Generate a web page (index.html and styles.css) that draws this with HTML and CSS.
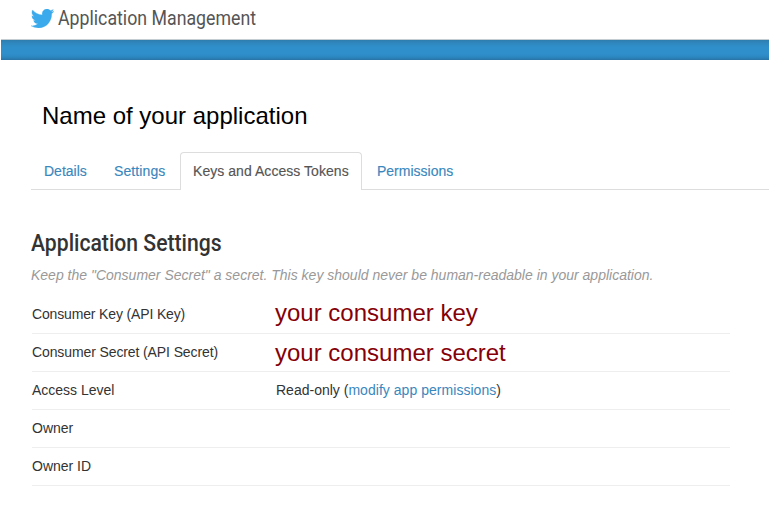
FILE: index.html
```html
<!DOCTYPE html>
<html lang="en">
<head>
<meta charset="utf-8">
<title>Application Management</title>
<link rel="stylesheet" href="styles.css">
</head>
<body>
<header class="header">
  <svg class="logo" viewBox="0 2.2 24 19.6" preserveAspectRatio="none" aria-hidden="true"><path d="M23.953 4.57a10 10 0 0 1-2.825.775 4.958 4.958 0 0 0 2.163-2.723c-.951.555-2.005.959-3.127 1.184a4.92 4.92 0 0 0-8.384 4.482C7.69 8.095 4.067 6.13 1.64 3.162a4.822 4.822 0 0 0-.666 2.475c0 1.71.87 3.213 2.188 4.096a4.904 4.904 0 0 1-2.228-.616v.06a4.923 4.923 0 0 0 3.946 4.827 4.996 4.996 0 0 1-2.212.085 4.936 4.936 0 0 0 4.604 3.417 9.867 9.867 0 0 1-6.102 2.105c-.39 0-.779-.023-1.17-.067a13.995 13.995 0 0 0 7.557 2.209c9.053 0 13.998-7.496 13.998-13.985 0-.21 0-.42-.015-.63A9.935 9.935 0 0 0 24 4.59z"/></svg>
  <span class="brand">Application Management</span>
</header>
<div class="band"></div>
<main class="content">
  <h1 class="app-name">Name of your application</h1>
  <nav class="tabs">
    <a class="tab details">Details</a>
    <a class="tab settings">Settings</a>
    <a class="tab active">Keys and Access Tokens</a>
    <a class="tab permissions">Permissions</a>
  </nav>
  <h2 class="section-title"><span>Application Settings</span></h2>
  <p class="note">Keep the "Consumer Secret" a secret. This key should never be human-readable in your application.</p>
  <dl class="rows">
    <div class="row"><dt class="key">Consumer Key (API Key)</dt><dd class="secret first">your consumer key</dd></div>
    <div class="row"><dt class="api-secret">Consumer Secret (API Secret)</dt><dd class="secret">your consumer secret</dd></div>
    <div class="row"><dt>Access Level</dt><dd class="access">Read-only (<a>modify app permissions</a>)</dd></div>
    <div class="row"><dt>Owner</dt><dd></dd></div>
    <div class="row"><dt>Owner ID</dt><dd></dd></div>
  </dl>
</main>
</body>
</html>
```
FILE: styles.css
```css
* { box-sizing: border-box; }
body {
  margin: 0;
  overflow: hidden;
  background: #fff;
  color: #333;
  font: 14px/20px "Liberation Sans", Arial, sans-serif;
}
.header {
  display: flex;
  align-items: flex-start;
  height: 39px;
  padding-left: 31px;
}
.logo { width: 23px; height: 19px; margin-top: 9px; fill: #3aaaec; stroke: #3aaaec; stroke-width: .3px; }
.brand {
  margin: 6px 0 0 4px;
  color: #555;
  font: 20px/24px Roboto, sans-serif;
  white-space: nowrap;
  transform: scaleX(.887);
  transform-origin: left;
}
.band {
  height: 21px;
  margin-left: 1px;
  border-top: 1px solid #c3cdd2;
  background: linear-gradient(#2f7dae 0, #2f87be 3px, #2f8fca 7px, #2f8fca 14px, #2c87c0 17px, #2874a5 20px);
}
.content { padding-left: 31px; }
.app-name {
  margin: 41px 0 0 11px;
  color: #000;
  font-size: 24px;
  font-weight: 400;
  line-height: 30px;
}
.tabs {
  display: flex;
  height: 38px;
  margin-top: 21px;
  padding-left: 13px;
  border-bottom: 1px solid #ddd;
}
.tab { padding-top: 9px; color: #3a87bd; white-space: nowrap; -webkit-text-stroke: .15px; }
.details { width: 70px; }
.settings { width: 66px; letter-spacing: .1px; }
.active {
  width: 182px;
  height: 38px;
  padding: 8px 0 0 12px;
  border: 1px solid #ddd;
  border-bottom: 0;
  border-radius: 4px 4px 0 0;
  background: #fff;
  color: #555;
  letter-spacing: .05px;
}
.permissions { margin-left: 15px; }
.section-title {
  margin: 40px 0 0;
  font: 500 23px/28px Roboto, sans-serif;
}
.section-title span { display: inline-block; transform: scaleX(.92); transform-origin: left; }
.note { margin: 7px 0 0; color: #999; font-style: italic; white-space: nowrap; }
.rows { width: 698px; margin: 11px 0 0 1px; }
.row { display: flex; height: 38px; padding-top: 8px; border-bottom: 1px solid #eee; }
dt { width: 244px; white-space: nowrap; }
.key { letter-spacing: -.15px; }
.api-secret { letter-spacing: -.11px; }
dd { margin: 0; white-space: nowrap; }
.secret { margin: 1px 0 0 -1px; color: #860008; font-size: 24px; }
.first { margin-top: -1px; }
.access a { color: #3a87bd; letter-spacing: .04px; }
```
